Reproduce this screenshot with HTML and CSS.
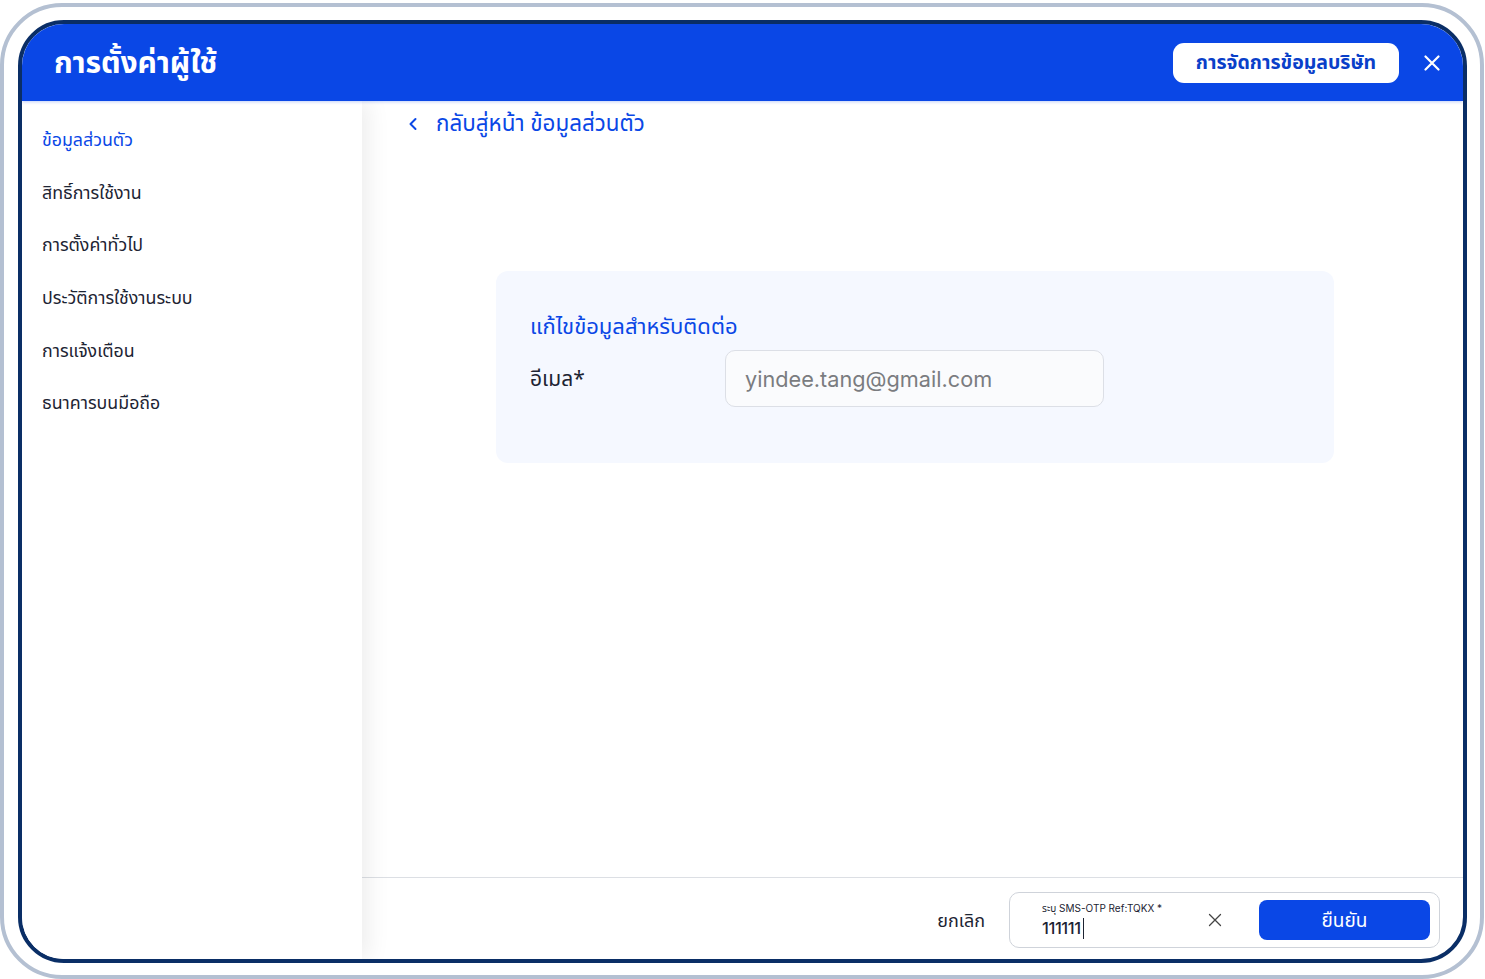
FILE: index.html
```html
<!DOCTYPE html>
<html lang="th">
<head>
<meta charset="utf-8">
<title>การตั้งค่าผู้ใช้</title>
<link rel="stylesheet" href="styles.css">
</head>
<body>
<div class="device">
  <div class="window">
    <header class="topbar">
      <h1 class="title">การตั้งค่าผู้ใช้</h1>
      <div class="top-actions">
        <button class="company-btn">การจัดการข้อมูลบริษัท</button>
        <button class="close-btn" aria-label="ปิด">
          <svg width="16" height="16" viewBox="0 0 16 16"><path d="M1.5 1.5 L14.5 14.5 M14.5 1.5 L1.5 14.5" stroke="#fff" stroke-width="2.2" stroke-linecap="round"/></svg>
        </button>
      </div>
    </header>
    <div class="body">
      <nav class="sidebar">
        <a class="nav-item active">ข้อมูลส่วนตัว</a>
        <a class="nav-item">สิทธิ์การใช้งาน</a>
        <a class="nav-item">การตั้งค่าทั่วไป</a>
        <a class="nav-item">ประวัติการใช้งานระบบ</a>
        <a class="nav-item">การแจ้งเตือน</a>
        <a class="nav-item">ธนาคารบนมือถือ</a>
      </nav>
      <main class="main">
        <div class="content">
          <a class="back">
            <svg width="10" height="14" viewBox="0 0 10 14"><path d="M7.5 2 L2.5 7 L7.5 12" fill="none" stroke="#0a47e6" stroke-width="2" stroke-linecap="round" stroke-linejoin="round"/></svg>
            <span>กลับสู่หน้า ข้อมูลส่วนตัว</span>
          </a>
          <section class="card">
            <h2 class="card-title">แก้ไขข้อมูลสำหรับติดต่อ</h2>
            <div class="field">
              <label class="field-label">อีเมล*</label>
              <div class="input">yindee.tang@gmail.com</div>
            </div>
          </section>
        </div>
        <footer class="footer">
          <button class="cancel">ยกเลิก</button>
          <div class="otp">
            <div class="otp-field">
              <div class="otp-label">ระบุ SMS-OTP Ref:TQKX *</div>
              <div class="otp-value">111111<span class="caret"></span></div>
            </div>
            <button class="otp-clear" aria-label="ล้าง">
              <svg width="14" height="14" viewBox="0 0 14 14"><path d="M1.5 1.5 L12.5 12.5 M12.5 1.5 L1.5 12.5" stroke="#444" stroke-width="1.3" stroke-linecap="round"/></svg>
            </button>
            <button class="confirm">ยืนยัน</button>
          </div>
        </footer>
      </main>
    </div>
  </div>
</div>
</body>
</html>
```
FILE: styles.css
```css
* { box-sizing: border-box; }
html, body { margin: 0; padding: 0; background: #fff; }
body {
  width: 1485px;
  height: 979px;
  overflow: hidden;
  font-family: "Noto Sans Thai", "Noto Sans Thai Looped", Inter, "Noto Sans", sans-serif;
  color: #1d2433;
}
button { font-family: inherit; border: none; background: none; padding: 0; cursor: pointer; }
.device {
  margin-top: 3px;
  width: 1484px;
  height: 976px;
  border: 4px solid #b4c0d2;
  border-radius: 62px;
  padding: 13px 13px 12px 14px;
}
.window {
  width: 100%;
  height: 100%;
  border: 4px solid #0a2e66;
  border-radius: 46px;
  overflow: hidden;
  display: flex;
  flex-direction: column;
  background: #fff;
}
.topbar {
  height: 77px;
  flex: none;
  background: #0a47e6;
  display: flex;
  align-items: center;
  justify-content: space-between;
  padding: 0 22px 0 32px;
  position: relative;
  z-index: 2;
  box-shadow: 0 1px 3px rgba(10, 71, 230, 0.25);
}
.title {
  margin: 0;
  padding-top: 3px;
  color: #fff;
  font-size: 30px;
  font-weight: 700;
  letter-spacing: -0.1px;
}
.top-actions { display: flex; align-items: center; gap: 24px; }
.company-btn {
  width: 226px;
  height: 40px;
  border-radius: 11px;
  background: #fff;
  color: #0a3fc9;
  font-size: 19.5px;
  font-weight: 700;
  padding-top: 1px;
}
.close-btn { width: 18px; height: 18px; display: flex; align-items: center; justify-content: center; }
.body { flex: 1; display: flex; min-height: 0; }
.sidebar {
  width: 340px;
  flex: none;
  padding-top: 13px;
  background: #fff;
  display: flex;
  flex-direction: column;
  position: relative;
  z-index: 1;
  box-shadow: 6px 0 22px rgba(0, 0, 0, 0.075);
}
.nav-item {
  height: 52.6px;
  display: flex;
  align-items: center;
  padding-left: 20px;
  padding-top: 1px;
  font-size: 17.8px;
  color: #1d2433;
}
.nav-item.active { color: #0a47e6; }
.main { flex: 1; display: flex; flex-direction: column; min-width: 0; }
.content { flex: 1; padding: 10px 0 0 46px; }
.back {
  display: flex;
  align-items: center;
  gap: 18px;
  height: 26px;
  color: #0a47e6;
  font-size: 22.4px;
}
.card {
  margin: 134px 0 0 88px;
  width: 838px;
  height: 192px;
  background: #f5f8ff;
  border-radius: 12px;
  padding: 42px 34px 0;
}
.card-title {
  margin: 0;
  font-size: 22px;
  font-weight: 400;
  color: #0a47e6;
  height: 30px;
  line-height: 30px;
}
.field { display: flex; align-items: center; margin-top: 7px; }
.field-label { width: 195px; font-size: 21px; color: #1d2433; padding-top: 2px; }
.input {
  width: 379px;
  height: 57px;
  border: 1px solid #dcdfe6;
  border-radius: 10px;
  background: #fafbfd;
  display: flex;
  align-items: center;
  padding-left: 19px;
  font-family: Inter, "Noto Sans", sans-serif;
  font-size: 21.7px;
  color: #7a7c80;
}
.footer {
  height: 82px;
  flex: none;
  border-top: 1px solid #dcdfe4;
  display: flex;
  align-items: center;
  justify-content: flex-end;
  gap: 24px;
  padding: 2px 23px 0 0;
}
.cancel { font-size: 18px; color: #1d2433; padding-top: 4px; }
.otp {
  width: 431px;
  height: 56px;
  border: 1px solid #cfd3da;
  border-radius: 10px;
  display: flex;
  align-items: center;
  padding: 0 9px 0 32px;
}
.otp-field { flex: 1; display: flex; flex-direction: column; }
.otp-label {
  font-family: Inter, "Noto Sans Thai", sans-serif;
  font-size: 10px;
  color: #1d2433;
  line-height: 14px;
}
.otp-value {
  font-family: Inter, sans-serif;
  font-size: 16.5px;
  font-weight: 500;
  color: #1d2433;
  line-height: 20px;
  margin-top: 3px;
  display: flex;
  align-items: center;
  letter-spacing: -0.4px;
}
.caret { width: 1px; height: 21px; background: #1d2433; margin-left: 2px; }
.otp-clear { width: 14px; height: 14px; margin-right: 37px; display: flex; }
.confirm {
  width: 171px;
  height: 40px;
  border-radius: 8px;
  background: #0a47e6;
  color: #fff;
  font-size: 19px;
  padding-top: 3px;
}
```
